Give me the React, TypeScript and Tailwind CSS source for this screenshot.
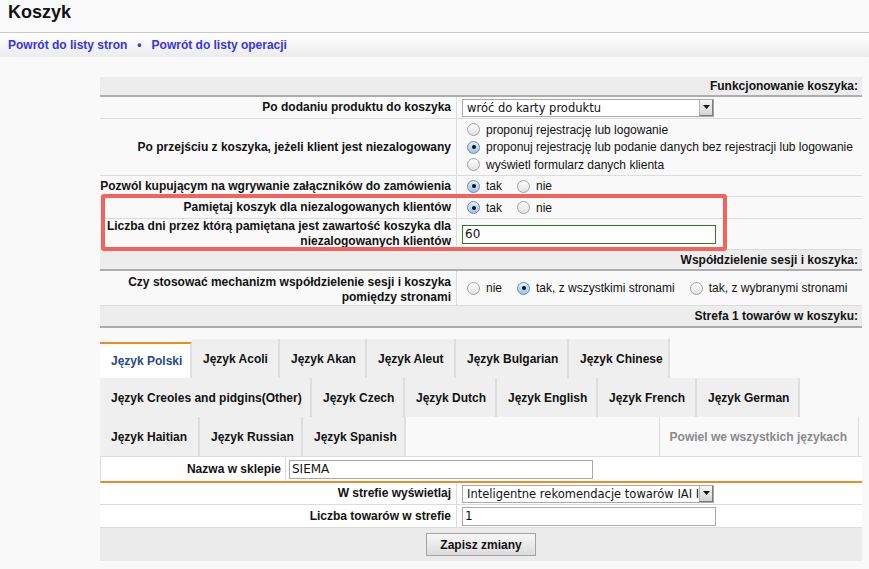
import React from 'react';

function Radio({ checked = false }: { checked?: boolean }) {
  return (
    <span
      className={
        checked
          ? "relative inline-block shrink-0 w-[13px] h-[13px] rounded-full border border-[#6b8bb0] bg-linear-to-b from-[#e2effc] to-[#9cc2ec] ml-[5px] mr-[6px]"
          : "relative inline-block shrink-0 w-[13px] h-[13px] rounded-full border border-[#a3a3a3] bg-linear-to-b from-white to-[#e0e0e0] ml-[5px] mr-[6px]"
      }
    >
      {checked && <span className="absolute left-[3.5px] top-[3.5px] w-[4px] h-[4px] rounded-full bg-[#111]" />}
    </span>
  );
}

function Opt({ checked = false, label }: { checked?: boolean; label: string }) {
  return (
    <span className="flex items-center whitespace-nowrap">
      <Radio checked={checked} />
      <span className="mr-[10px]">{label}</span>
    </span>
  );
}

function Arrow() {
  return (
    <span className="flex h-full w-[14px] shrink-0 items-center justify-center border-l border-[#b5b5b5] border-r border-b border-r-[#7a7a7a] border-b-[#7a7a7a] bg-linear-to-b from-[#f6f6f6] to-[#d4d4d4]">
      <svg width="7" height="4" viewBox="0 0 7 4">
        <path d="M0 0 L7 0 L3.5 4 Z" fill="#111" />
      </svg>
    </span>
  );
}

function Select({ text }: { text: string }) {
  return (
    <div className="flex h-[18px] w-[252px] items-center border border-[#a9a9a9] bg-white">
      <span className="flex-1 overflow-hidden whitespace-nowrap pl-[4px] font-['DejaVu_Sans',sans-serif] text-[11.5px] leading-[16px] text-[#111]">
        {text}
      </span>
      <Arrow />
    </div>
  );
}

function Row({
  label,
  children,
  h,
}: {
  label: React.ReactNode;
  children?: React.ReactNode;
  h: string;
}) {
  return (
    <div className={`flex border-b border-[#dcdcdc] ${h}`}>
      <div className="flex w-[357px] shrink-0 items-center justify-end whitespace-nowrap border-r border-[#dcdcdc] pr-[5px] text-right font-bold leading-[15px]">
        {label}
      </div>
      <div className="flex flex-1 items-center pl-[5px]">{children}</div>
    </div>
  );
}

function Section({ title, h }: { title: string; h: string }) {
  return (
    <div className={`flex items-center justify-end border-b-2 border-[#adadad] bg-[#ededed] pr-[4px] font-bold ${h}`}>
      {title}
    </div>
  );
}

function Tab({ label, active = false, w }: { label: string; active?: boolean; w: string }) {
  if (active) {
    return (
      <div className={`mt-[3px] flex h-[36px] items-center border-t-2 border-r-2 border-t-[#ef8c1f] border-r-[#dedede] bg-white pl-[11px] font-bold text-[#26488f] ${w}`}>
        {label}
      </div>
    );
  }
  return (
    <div className={`flex h-[39px] items-center border-r-2 border-[#dedede] bg-[#efefef] pl-[11px] font-bold text-[#111] ${w}`}>
      {label}
    </div>
  );
}

export default function App() {
  return (
    <div className="min-h-[569px] bg-[#f9f9f9] font-['Liberation_Sans',Arial,sans-serif] text-[12px] text-[#111]">
      {/* title */}
      <div className="h-[33px] border-b border-[#c9c9c9] bg-[#fafafa] pl-[8px] pt-[2px]">
        <h1 className="text-[18px] font-bold leading-[21px] text-[#111]">Koszyk</h1>
      </div>
      {/* nav */}
      <div className="flex h-[24px] items-center bg-linear-to-b from-white to-[#ececec] pl-[8px] font-bold text-[#3434e6]">
        <span>Powrót do listy stron</span>
        <span className="mx-[10px] text-[#3434e6]">•</span>
        <span>Powrót do listy operacji</span>
      </div>

      <div className="ml-[100px] mt-[20px] w-[762px]">
        <Section title="Funkcjonowanie koszyka:" h="h-[20px]" />
        <Row label="Po dodaniu produktu do koszyka" h="h-[22px]">
          <Select text="wróć do karty produktu" />
        </Row>
        <Row label="Po przejściu z koszyka, jeżeli klient jest niezalogowany" h="h-[57px]">
          <div className="flex flex-col">
            <div className="flex h-[17.5px] items-center">
              <Opt label="proponuj rejestrację lub logowanie" />
            </div>
            <div className="flex h-[17.5px] items-center">
              <Opt checked label="proponuj rejestrację lub podanie danych bez rejestracji lub logowanie" />
            </div>
            <div className="flex h-[17.5px] items-center">
              <Opt label="wyświetl formularz danych klienta" />
            </div>
          </div>
        </Row>
        <Row label="Pozwól kupującym na wgrywanie załączników do zamówienia" h="h-[21px]">
          <Opt checked label="tak" />
          <Opt label="nie" />
        </Row>
        <div className="relative">
          <Row label="Pamiętaj koszyk dla niezalogowanych klientów" h="h-[22px]">
            <Opt checked label="tak" />
            <Opt label="nie" />
          </Row>
          <Row
            label={
              <span className="block leading-[15px]">
                Liczba dni przez którą pamiętana jest zawartość koszyka dla
                <br />
                niezalogowanych klientów
              </span>
            }
            h="h-[31px]"
          >
            <div className="flex h-[19px] w-[254px] items-center border border-[#2f7a1c] bg-white pl-[2px] font-['DejaVu_Sans',sans-serif] text-[12px]">
              60
            </div>
          </Row>
          <div className="pointer-events-none absolute left-[1px] top-[-3px] h-[57px] w-[626px] rounded-[3px] border-4 border-[#f2645b]" />
        </div>
        <Section title="Współdzielenie sesji i koszyka:" h="h-[21px]" />
        <Row
          label={
            <span className="block pt-[3px] leading-[15px]">
              Czy stosować mechanizm współdzielenie sesji i koszyka
              <br />
              pomiędzy stronami
            </span>
          }
          h="h-[35px]"
        >
          <Opt label="nie" />
          <Opt checked label="tak, z wszystkimi stronami" />
          <Opt label="tak, z wybranymi stronami" />
        </Row>
        <Section title="Strefa 1 towarów w koszyku:" h="h-[22px]" />

        {/* tabs */}
        <div className="mt-[11px]">
          <div className="flex">
            <Tab active label="Język Polski" w="w-[92px]" />
            <Tab label="Język Acoli" w="w-[88px]" />
            <Tab label="Język Akan" w="w-[87px]" />
            <Tab label="Język Aleut" w="w-[89px]" />
            <Tab label="Język Bulgarian" w="w-[113px]" />
            <Tab label="Język Chinese" w="w-[101px]" />
          </div>
          <div className="flex">
            <Tab label="Język Creoles and pidgins(Other)" w="w-[212px]" />
            <Tab label="Język Czech" w="w-[93px]" />
            <Tab label="Język Dutch" w="w-[92px]" />
            <Tab label="Język English" w="w-[101px]" />
            <Tab label="Język French" w="w-[99px]" />
            <Tab label="Język German" w="w-[103px]" />
          </div>
          <div className="flex">
            <Tab label="Język Haitian" w="w-[100px]" />
            <Tab label="Język Russian" w="w-[103px]" />
            <Tab label="Język Spanish" w="w-[103px]" />
            <div className="ml-auto mr-[3px] flex h-[39px] w-[200px] items-center justify-end border-x border-[#dcdcdc] pr-[11px] font-bold text-[#8a8a8a]">
              Powiel we wszystkich językach
            </div>
          </div>
        </div>

        {/* nazwa */}
        <div className="flex h-[27px] border-b-2 border-[#ef8c1f] border-l border-t border-l-[#dcdcdc] border-t-[#dcdcdc] bg-white">
          <div className="flex w-[185px] shrink-0 items-center justify-end border-r border-[#dcdcdc] pr-[4px] font-bold">
            Nazwa w sklepie
          </div>
          <div className="flex flex-1 items-center pl-[3px]">
            <div className="flex h-[19px] w-[304px] items-center border border-[#a9a9a9] bg-white pl-[2px] font-['DejaVu_Sans',sans-serif] text-[12px]">
              SIEMA
            </div>
          </div>
        </div>
        <div className="bg-white">
          <Row label="W strefie wyświetlaj" h="h-[22px]">
            <Select text="Inteligentne rekomendacje towarów IAI Inteligentne" />
          </Row>
          <Row label="Liczba towarów w strefie" h="h-[23px]">
            <div className="flex h-[19px] w-[254px] items-center border border-[#a9a9a9] bg-white pl-[2px] font-['DejaVu_Sans',sans-serif] text-[12px]">
              1
            </div>
          </Row>
        </div>
        <div className="flex h-[33px] items-center justify-center bg-[#ebebeb]">
          <button className="h-[23px] w-[110px] border border-[#a3a3a3] bg-linear-to-b from-[#f7f7f7] to-[#dcdcdc] text-[12px] font-bold text-[#111]">
            Zapisz zmiany
          </button>
        </div>
      </div>
    </div>
  );
}
